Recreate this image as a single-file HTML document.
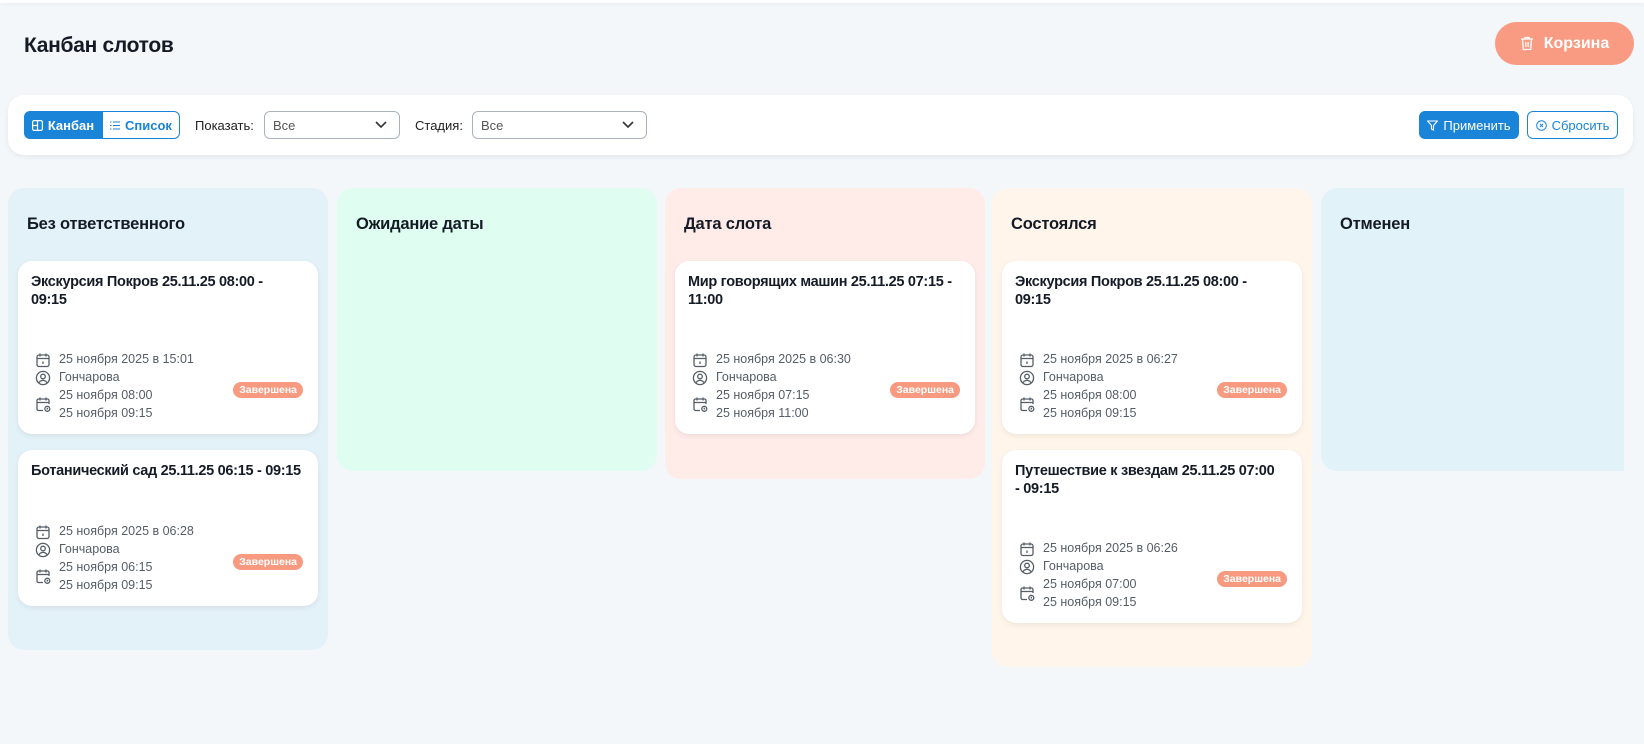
<!DOCTYPE html>
<html><head><meta charset="utf-8"><style>
*{box-sizing:border-box;margin:0;padding:0}
body{width:1644px;height:744px;overflow:hidden;background:#f3f7fa;font-family:"Liberation Sans",sans-serif;color:#151b26;position:relative}
.topbar{position:absolute;left:0;top:0;width:1644px;height:3px;background:#fff;box-shadow:0 1px 4px rgba(0,0,0,.06)}
h1{position:absolute;left:24px;top:34px;font-size:21px;font-weight:bold;letter-spacing:-.3px}
.trash{position:absolute;left:1495px;top:22px;width:139px;height:43px;border-radius:22px;background:#f99b82;color:#fff;font-size:16px;font-weight:bold;display:flex;align-items:center;justify-content:center;gap:10px}
.bar{position:absolute;left:8px;top:95px;width:1625px;height:60px;background:#fff;border-radius:16px;box-shadow:0 2px 6px rgba(0,0,0,.06)}
.tog{position:absolute;top:16px;height:28px;font-size:13px;font-weight:bold;display:flex;align-items:center;justify-content:center;gap:5px}
.sel{position:absolute;top:16px;height:28px;border:1px solid #aab3bd;border-radius:6px;font-size:13px;color:#555;padding-left:8px;display:flex;align-items:center}
.sel svg{position:absolute;right:12px;top:9px}
.lbl{position:absolute;top:23px;font-size:13px;color:#222}
.col{position:absolute;top:188px;width:320px;border-radius:16px}
.col h2{position:absolute;left:19px;top:27px;font-size:16.5px;font-weight:bold;letter-spacing:-.2px}
.card{position:absolute;left:10px;width:300px;background:#fff;border-radius:14px;box-shadow:0 2px 6px rgba(0,0,0,.07)}
.card .t{position:absolute;left:13px;top:12px;font-size:14.5px;font-weight:bold;line-height:18px;letter-spacing:-.3px;white-space:nowrap}
.meta{position:absolute;left:17px;bottom:10px;width:268px;height:72px;font-size:12.5px;color:#555d66}
.meta div{position:absolute;left:24px;white-space:nowrap}
.meta svg{position:absolute;left:0}
.badge{position:absolute;right:0;top:30px;background:#f79a80;color:#fff;font-size:10.5px;border-radius:9px;padding:2px 6px;font-weight:bold}
</style></head><body>
<div class="topbar"></div>
<h1>Канбан слотов</h1>
<div class="trash"><svg width="14" height="15" viewBox="0 0 14 15" fill="none" stroke="#fff" stroke-width="1.3"><path d="M1 3h12M5 3V1.5h4V3M2.5 3l.8 10.5h7.4L11.5 3M5.8 6v5M8.2 6v5"/></svg>Корзина</div>
<div class="bar">
 <div class="tog" style="left:16px;width:78px;background:#1a84d8;color:#fff;border-radius:6px 0 0 6px"><svg width="11" height="11" viewBox="0 0 11 11" fill="none" stroke="#fff" stroke-width="1.2"><rect x=".6" y=".6" width="9.8" height="9.8" rx="1.5"/><path d="M5.5 .6v9.8M.6 5.5h4.9"/></svg>Канбан</div>
 <div class="tog" style="left:94px;width:78px;border:1px solid #1a84d8;color:#1a84d8;border-radius:0 6px 6px 0"><svg width="10" height="9" viewBox="0 0 10 9" fill="none" stroke="#1a84d8" stroke-width="1.1"><path d="M0 1h1.5M3 1h7M0 4.5h1.5M3 4.5h7M0 8h1.5M3 8h7"/></svg>Список</div>
 <div class="lbl" style="left:187px">Показать:</div>
 <div class="sel" style="left:256px;width:136px">Все<svg width="12" height="8" viewBox="0 0 12 8" fill="none" stroke="#333" stroke-width="1.6"><path d="M1 1l5 5 5-5"/></svg></div>
 <div class="lbl" style="left:407px">Стадия:</div>
 <div class="sel" style="left:464px;width:175px">Все<svg width="12" height="8" viewBox="0 0 12 8" fill="none" stroke="#333" stroke-width="1.6"><path d="M1 1l5 5 5-5"/></svg></div>
 <div class="tog" style="left:1411px;width:100px;background:#1a84d8;color:#fff;border-radius:6px;font-weight:normal"><svg width="11" height="11" viewBox="0 0 11 11" fill="none" stroke="#fff" stroke-width="1.1"><path d="M.6 1h9.8L6.5 5.5V10L4.5 9V5.5z"/></svg>Применить</div>
 <div class="tog" style="left:1519px;width:91px;border:1px solid #1a84d8;color:#1a84d8;border-radius:6px;font-weight:normal"><svg width="11" height="11" viewBox="0 0 11 11" fill="none" stroke="#1a84d8" stroke-width="1"><circle cx="5.5" cy="5.5" r="4.8"/><path d="M4 4l3 3M7 4l-3 3"/></svg>Сбросить</div>
</div>

<svg width="0" height="0" style="position:absolute"><defs>
<symbol id="cal" viewBox="0 0 16 16"><g fill="none" stroke="#555d66" stroke-width="1.3"><rect x="2" y="3" width="12" height="11.5" rx="2"/><path d="M2 6.5h12M5 1.5v3M11 1.5v3M8 9.5v2.5"/></g></symbol>
<symbol id="usr" viewBox="0 0 16 16"><g fill="none" stroke="#555d66" stroke-width="1.3"><circle cx="8" cy="8" r="6.6"/><circle cx="8" cy="6.5" r="2.3"/><path d="M3.8 13c1-1.8 2.4-2.6 4.2-2.6s3.2.8 4.2 2.6"/></g></symbol>
<symbol id="calc" viewBox="0 0 16 16"><g fill="none" stroke="#555d66" stroke-width="1.3"><path d="M8 14.5H3.5a1.5 1.5 0 0 1-1.5-1.5V4.5A1.5 1.5 0 0 1 3.5 3h9A1.5 1.5 0 0 1 14 4.5V8M2 6.5h12M5 1.5v3M11 1.5v3"/><circle cx="12.3" cy="12.8" r="2.5"/><path d="M12.3 11.8v1h.8"/></g></symbol>
</defs></svg>

<div class="col" style="left:8px;height:462px;background:#e3f2f8"><h2>Без ответственного</h2>
 <div class="card" style="top:73px;height:173px"><div class="t">Экскурсия Покров 25.11.25 08:00 -<br>09:15</div>
  <div class="meta"><svg style="top:0" width="16" height="16"><use href="#cal"/></svg><div style="top:0">25 ноября 2025 в 15:01</div><svg style="top:18px" width="16" height="16"><use href="#usr"/></svg><div style="top:18px">Гончарова</div><svg style="top:44px" width="16" height="16"><use href="#calc"/></svg><div style="top:36px">25 ноября 08:00</div><div style="top:54px">25 ноября 09:15</div><span class="badge">Завершена</span></div></div>
 <div class="card" style="top:262px;height:156px"><div class="t">Ботанический сад 25.11.25 06:15 - 09:15</div>
  <div class="meta"><svg style="top:0" width="16" height="16"><use href="#cal"/></svg><div style="top:0">25 ноября 2025 в 06:28</div><svg style="top:18px" width="16" height="16"><use href="#usr"/></svg><div style="top:18px">Гончарова</div><svg style="top:44px" width="16" height="16"><use href="#calc"/></svg><div style="top:36px">25 ноября 06:15</div><div style="top:54px">25 ноября 09:15</div><span class="badge">Завершена</span></div></div>
</div>
<div class="col" style="left:337px;height:283px;background:#dffdf1"><h2>Ожидание даты</h2></div>
<div class="col" style="left:665px;height:291px;background:#ffebe8"><h2>Дата слота</h2>
 <div class="card" style="top:73px;height:173px"><div class="t">Мир говорящих машин 25.11.25 07:15 -<br>11:00</div>
  <div class="meta"><svg style="top:0" width="16" height="16"><use href="#cal"/></svg><div style="top:0">25 ноября 2025 в 06:30</div><svg style="top:18px" width="16" height="16"><use href="#usr"/></svg><div style="top:18px">Гончарова</div><svg style="top:44px" width="16" height="16"><use href="#calc"/></svg><div style="top:36px">25 ноября 07:15</div><div style="top:54px">25 ноября 11:00</div><span class="badge">Завершена</span></div></div>
</div>
<div class="col" style="left:992px;height:479px;background:#fff5ea"><h2>Состоялся</h2>
 <div class="card" style="top:73px;height:173px"><div class="t">Экскурсия Покров 25.11.25 08:00 -<br>09:15</div>
  <div class="meta"><svg style="top:0" width="16" height="16"><use href="#cal"/></svg><div style="top:0">25 ноября 2025 в 06:27</div><svg style="top:18px" width="16" height="16"><use href="#usr"/></svg><div style="top:18px">Гончарова</div><svg style="top:44px" width="16" height="16"><use href="#calc"/></svg><div style="top:36px">25 ноября 08:00</div><div style="top:54px">25 ноября 09:15</div><span class="badge">Завершена</span></div></div>
 <div class="card" style="top:262px;height:173px"><div class="t">Путешествие к звездам 25.11.25 07:00<br>- 09:15</div>
  <div class="meta"><svg style="top:0" width="16" height="16"><use href="#cal"/></svg><div style="top:0">25 ноября 2025 в 06:26</div><svg style="top:18px" width="16" height="16"><use href="#usr"/></svg><div style="top:18px">Гончарова</div><svg style="top:44px" width="16" height="16"><use href="#calc"/></svg><div style="top:36px">25 ноября 07:00</div><div style="top:54px">25 ноября 09:15</div><span class="badge">Завершена</span></div></div>
</div>
<div class="col" style="left:1321px;width:303px;height:283px;background:#e1f3f9;border-radius:16px 0 0 16px"><h2>Отменен</h2></div>
</body></html>
